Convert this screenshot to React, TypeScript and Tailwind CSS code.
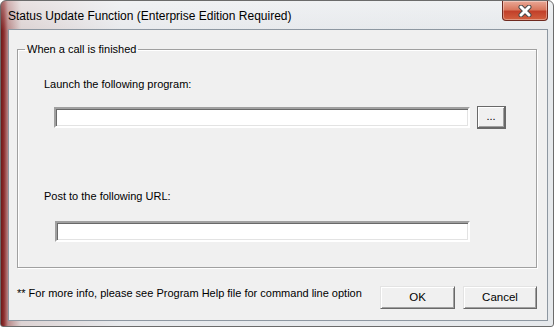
import React from 'react';

const ui = "font-['Liberation_Sans','Arial',sans-serif]";

function CloseGlyph() {
  return (
    <svg width="14" height="12" viewBox="0 0 14 12">
      <path d="M3 2 L11 10 M11 2 L3 10" stroke="#4a4a4a" strokeWidth="5" strokeLinecap="round" />
      <path d="M3 2 L11 10 M11 2 L3 10" stroke="#ffffff" strokeWidth="3" strokeLinecap="round" />
    </svg>
  );
}

function TextBox({ className = '' }: { className?: string }) {
  // classic sunken edit control
  return (
    <div
      className={`h-[21px] bg-white border-2 border-t-[#a0a0a0] border-l-[#a0a0a0] border-b-white border-r-white shadow-[inset_1px_1px_0_#696969,inset_-1px_-1px_0_#e3e3e3] ${className}`}
    />
  );
}

function Button({ label, className = '' }: { label: string; className?: string }) {
  return (
    <button
      className={`h-[23px] bg-[#f0f0f0] text-[11.5px] text-black border border-t-[#e3e3e3] border-l-[#e3e3e3] border-b-[#696969] border-r-[#696969] shadow-[inset_1px_1px_0_#ffffff,inset_-1px_-1px_0_#a0a0a0] ${className}`}
    >
      {label}
    </button>
  );
}

export default function App() {
  return (
    <div
      className={`${ui} w-[554px] h-[327px] overflow-hidden rounded-t-[6px] rounded-b-[3px] border border-[#6b6b6b] flex flex-col bg-[linear-gradient(to_bottom,rgba(255,255,255,0.35)_0px,rgba(255,255,255,0)_30px),linear-gradient(to_right,#6e1a1a_0px,#8e3030_3px,#b98a8a_7px,#ddd3d3_20px,#e8eaed_120px,#e6e9ec_100%)]`}
    >
      {/* Title bar */}
      <div className="h-[28px] flex items-start shrink-0">
        <div className="pl-[7px] pt-[8px] text-[12px] leading-[15px] text-black">
          Status Update Function (Enterprise Edition Required)
        </div>
        <div className="ml-auto mr-[5px] mt-0 w-[46px] h-[20px] rounded-b-[4px] border border-t-0 border-[#6e2a20] bg-[linear-gradient(to_bottom,#e9a896_0%,#d9785f_45%,#c2402a_55%,#d2603f_100%)] shadow-[inset_0_0_0_1px_rgba(255,255,255,0.35)] flex items-center justify-center">
          <CloseGlyph />
        </div>
      </div>

      {/* Client area */}
      <div className="ml-[7px] w-[540px] h-[292px] border border-[#8d97a1] bg-[#f0f0f0] flex flex-col">
        <fieldset className="ml-[8px] mt-[12px] w-[520px] h-[226px] border border-[#a0a0a0] shadow-[1px_1px_0_#ffffff,inset_1px_1px_0_#ffffff]">
          <legend className="ml-[7px] px-[2px] text-[11px] leading-[14px] text-black">
            When a call is finished
          </legend>
          <div className="pl-[26px] flex flex-col">
            <div className="mt-[21px] text-[11px] leading-[15px] text-black">
              Launch the following program:
            </div>
            <div className="mt-[14px] ml-[10px] flex items-center">
              <TextBox className="w-[416px]" />
              <button className="ml-[7px] w-[29px] h-[23px] bg-[#f0f0f0] border border-[#696969] border-b-2 border-r-2 shadow-[inset_1px_1px_0_#ffffff,inset_-1px_-1px_0_#a0a0a0] text-[11px] leading-[12px] text-black pb-[2px]">
                ...
              </button>
            </div>
            <div className="mt-[60px] text-[11px] leading-[15px] text-black">
              Post to the following URL:
            </div>
            <TextBox className="mt-[17px] ml-[11px] w-[415px]" />
          </div>
        </fieldset>

        <div className="mt-[18px] pl-[8px] pr-[10px] flex items-start">
          <div className="text-[11px] leading-[15px] text-black whitespace-nowrap">
            ** For more info, please see Program Help file for command line option
          </div>
          <Button label="OK" className="ml-auto w-[75px]" />
          <Button label="Cancel" className="ml-[8px] w-[74px]" />
        </div>
      </div>
    </div>
  );
}
